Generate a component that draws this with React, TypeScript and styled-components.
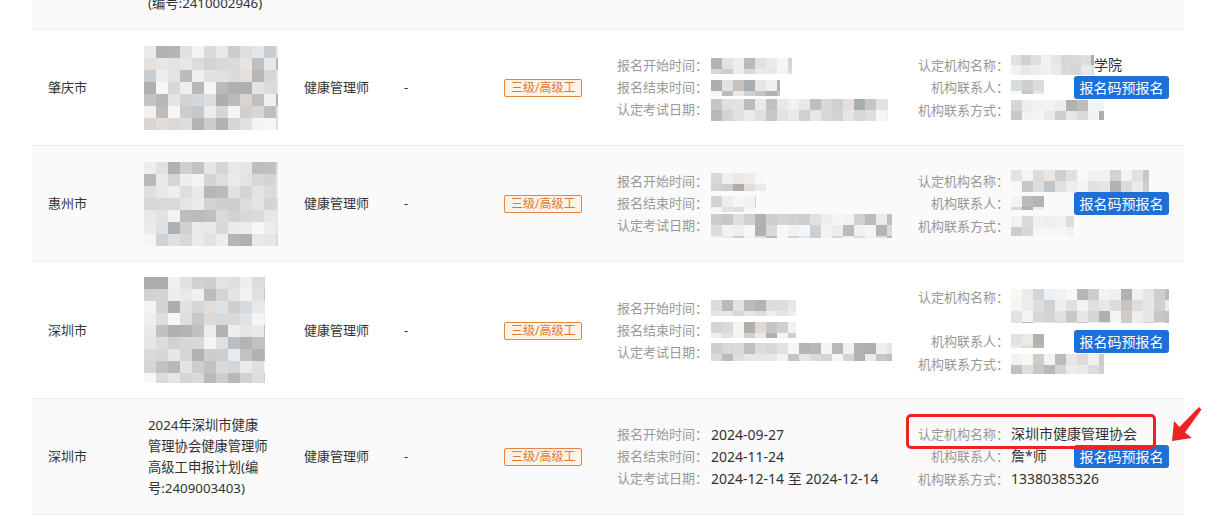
import React from 'react';
import styled, { createGlobalStyle } from 'styled-components';

const Global = createGlobalStyle`
  html, body { margin: 0; padding: 0; background: #fff; }
  body {
    font-family: "Noto Sans", "Noto Sans CJK SC", sans-serif;
    font-size: 13px;
    color: #333;
  }
`;

const Page = styled.div`
  width: 1228px;
  height: 526px;
  overflow: hidden;
  padding-left: 32px;
  box-sizing: border-box;
`;

const Table = styled.div`
  width: 1152px;
`;

const Row = styled.div<{ $striped?: boolean; $offset?: number }>`
  position: relative;
  display: grid;
  grid-template-columns: 100px 156px 100px 100px 113px 301px 282px;
  align-items: center;
  min-height: 116px;
  box-sizing: border-box;
  border-bottom: 1px solid #ebeef5;
  background: ${(p) => (p.$striped ? '#fafafa' : '#fff')};
  margin-top: ${(p) => p.$offset ?? 0}px;
`;

const Cell = styled.div`
  padding: 15px 16px;
  line-height: 21px;
  color: #333;
  white-space: nowrap;
`;

const PlanLine = styled.div`
  line-height: 21px;
  font-size: 13.3px;
`;

const MosaicBlock = styled.div<{ $shift?: number }>`
  margin-left: ${(p) => p.$shift ?? 0}px;
  line-height: 0;
`;

const Badge = styled.span`
  display: inline-block;
  height: 18px;
  line-height: 16px;
  padding: 0 6px;
  box-sizing: border-box;
  font-size: 12px;
  color: #e2782f;
  background: #fef3e9;
  border: 1px solid #e6853f;
  border-radius: 2px;
`;

const InfoLine = styled.div`
  display: flex;
  align-items: center;
  height: 22px;
  white-space: nowrap;
`;

const InfoLabel = styled.span`
  color: #999;
`;

const InfoValue = styled.span`
  color: #333;
  font-size: 14px;
  margin-left: 3px;
  display: inline-flex;
  align-items: center;
`;

const OrgLine = styled.div`
  display: flex;
  align-items: flex-start;
  line-height: 22px;
  min-height: 22px;
`;

const OrgLabel = styled.span`
  width: 91px;
  flex-shrink: 0;
  text-align: right;
  color: #999;
  white-space: nowrap;
`;

const OrgValue = styled.span<{ $w?: number; $tall?: boolean }>`
  ${(p) => (p.$w ? `width: ${p.$w}px; flex-shrink: 0;` : 'flex: 1;')}
  margin-left: 2px;
  color: #333;
  font-size: 14px;
  display: inline-flex;
  align-items: ${(p) => (p.$tall ? 'flex-start' : 'center')};
  padding-top: ${(p) => (p.$tall ? '3px' : '0')};
  box-sizing: border-box;
  min-height: ${(p) => (p.$tall ? '44px' : '22px')};
  white-space: nowrap;
`;

const PreButton = styled.button`
  width: 95px;
  height: 23px;
  padding: 0;
  border: none;
  border-radius: 3px;
  background: #1f6fd8;
  color: #fff;
  font-family: "Noto Sans CJK SC", sans-serif;
  font-size: 14px;
  line-height: 23px;
  cursor: pointer;
  flex-shrink: 0;
`;

const Highlight = styled.div`
  position: absolute;
  left: 874px;
  top: 15px;
  width: 250px;
  height: 35px;
  border: 3px solid #ee2222;
  border-radius: 5px;
  box-sizing: border-box;
  pointer-events: none;
`;

const ArrowWrap = styled.svg`
  position: absolute;
  left: 1133px;
  top: 4px;
  overflow: visible;
`;

function makeRand(seed: number) {
  let s = seed;
  return () => {
    s = (s * 9301 + 49297) % 233280;
    return s / 233280;
  };
}

type MosaicProps = { w: number; h: number; cell?: number; seed: number; dark?: number; light?: number };

function Mosaic({ w, h, cell = 12, seed, dark = 0.22, light = 0.1 }: MosaicProps) {
  const rnd = makeRand(seed);
  const cols = Math.ceil(w / cell);
  const rows = Math.ceil(h / cell);
  const rects: React.ReactNode[] = [];
  for (let r = 0; r < rows; r++) {
    for (let c = 0; c < cols; c++) {
      const a = rnd();
      const b = rnd();
      let v: number;
      if (a < dark) v = 172 + Math.round(b * 28);
      else if (a < 1 - light) v = 204 + Math.round(b * 34);
      else v = 238 + Math.round(b * 10);
      const tint = Math.round((rnd() - 0.5) * 6);
      rects.push(
        <rect
          key={`${r}-${c}`}
          x={c * cell}
          y={r * cell}
          width={cell}
          height={cell}
          fill={`rgb(${v + tint},${v},${v - tint})`}
        />
      );
    }
  }
  return (
    <svg width={w} height={h} viewBox={`0 0 ${w} ${h}`} style={{ display: 'inline-block', verticalAlign: 'middle' }}>
      {rects}
    </svg>
  );
}

function RedArrow() {
  return (
    <ArrowWrap width={42} height={44} viewBox="0 0 42 44">
      <polygon points="7,38 9,18 14.5,24 34,4 36.5,6.5 20,29.5 27,35" fill="#ee2222" />
    </ArrowWrap>
  );
}

const Info = ({ start, end, date }: { start: React.ReactNode; end: React.ReactNode; date: React.ReactNode }) => (
  <>
    <InfoLine>
      <InfoLabel>报名开始时间：</InfoLabel>
      <InfoValue>{start}</InfoValue>
    </InfoLine>
    <InfoLine>
      <InfoLabel>报名结束时间：</InfoLabel>
      <InfoValue>{end}</InfoValue>
    </InfoLine>
    <InfoLine>
      <InfoLabel>认定考试日期：</InfoLabel>
      <InfoValue>{date}</InfoValue>
    </InfoLine>
  </>
);

export default function App() {
  return (
    <>
      <Global />
      <Page>
        <Table>
          <Row $striped $offset={-86}>
            <Cell>深圳市</Cell>
            <Cell>
              <PlanLine>2024年深圳市职业</PlanLine>
              <PlanLine>技能鉴定健康管理师</PlanLine>
              <PlanLine>三级申报计划</PlanLine>
              <PlanLine>(编号:2410002946)</PlanLine>
            </Cell>
            <Cell>健康管理师</Cell>
            <Cell>-</Cell>
            <Cell>
              <Badge>三级/高级工</Badge>
            </Cell>
            <Cell />
            <Cell />
          </Row>

          <Row>
            <Cell>肇庆市</Cell>
            <Cell>
              <MosaicBlock $shift={-4}>
                <Mosaic w={134} h={84} seed={11} />
              </MosaicBlock>
            </Cell>
            <Cell>健康管理师</Cell>
            <Cell>-</Cell>
            <Cell>
              <Badge>三级/高级工</Badge>
            </Cell>
            <Cell>
              <Info
                start={<Mosaic w={81} h={16} cell={11} seed={21} />}
                end={<Mosaic w={69} h={16} cell={11} seed={22} light={0.3} />}
                date={<Mosaic w={177} h={22} cell={11} seed={23} />}
              />
            </Cell>
            <Cell>
              <OrgLine>
                <OrgLabel>认定机构名称：</OrgLabel>
                <OrgValue>
                  <Mosaic w={83} h={20} cell={10} seed={31} />
                  学院
                </OrgValue>
              </OrgLine>
              <OrgLine>
                <OrgLabel>机构联系人：</OrgLabel>
                <OrgValue $w={63}>
                  <Mosaic w={33} h={14} cell={11} seed={32} />
                </OrgValue>
                <PreButton>报名码预报名</PreButton>
              </OrgLine>
              <OrgLine>
                <OrgLabel>机构联系方式：</OrgLabel>
                <OrgValue>
                  <Mosaic w={93} h={20} cell={11} seed={33} light={0.3} />
                </OrgValue>
              </OrgLine>
            </Cell>
          </Row>

          <Row $striped>
            <Cell>惠州市</Cell>
            <Cell>
              <MosaicBlock $shift={-4}>
                <Mosaic w={134} h={84} seed={41} />
              </MosaicBlock>
            </Cell>
            <Cell>健康管理师</Cell>
            <Cell>-</Cell>
            <Cell>
              <Badge>三级/高级工</Badge>
            </Cell>
            <Cell>
              <Info
                start={<Mosaic w={55} h={18} cell={11} seed={51} light={0.3} />}
                end={<Mosaic w={45} h={16} cell={11} seed={52} light={0.4} />}
                date={<Mosaic w={181} h={24} cell={11} seed={53} light={0.3} />}
              />
            </Cell>
            <Cell>
              <OrgLine>
                <OrgLabel>认定机构名称：</OrgLabel>
                <OrgValue>
                  <Mosaic w={138} h={22} cell={11} seed={61} light={0.3} />
                </OrgValue>
              </OrgLine>
              <OrgLine>
                <OrgLabel>机构联系人：</OrgLabel>
                <OrgValue $w={63}>
                  <Mosaic w={33} h={14} cell={11} seed={62} light={0.4} />
                </OrgValue>
                <PreButton>报名码预报名</PreButton>
              </OrgLine>
              <OrgLine>
                <OrgLabel>机构联系方式：</OrgLabel>
                <OrgValue>
                  <Mosaic w={63} h={20} cell={11} seed={63} light={0.4} />
                </OrgValue>
              </OrgLine>
            </Cell>
          </Row>

          <Row>
            <Cell>深圳市</Cell>
            <Cell>
              <MosaicBlock $shift={-4}>
                <Mosaic w={121} h={106} seed={71} light={0.15} />
              </MosaicBlock>
            </Cell>
            <Cell>健康管理师</Cell>
            <Cell>-</Cell>
            <Cell>
              <Badge>三级/高级工</Badge>
            </Cell>
            <Cell>
              <Info
                start={<Mosaic w={85} h={16} cell={11} seed={81} light={0.2} />}
                end={<Mosaic w={85} h={16} cell={11} seed={82} light={0.3} />}
                date={<Mosaic w={181} h={18} cell={11} seed={83} light={0.2} />}
              />
            </Cell>
            <Cell>
              <OrgLine>
                <OrgLabel>认定机构名称：</OrgLabel>
                <OrgValue $tall>
                  <Mosaic w={158} h={34} cell={11} seed={91} light={0.2} />
                </OrgValue>
              </OrgLine>
              <OrgLine>
                <OrgLabel>机构联系人：</OrgLabel>
                <OrgValue $w={63}>
                  <Mosaic w={33} h={14} cell={11} seed={92} />
                </OrgValue>
                <PreButton>报名码预报名</PreButton>
              </OrgLine>
              <OrgLine>
                <OrgLabel>机构联系方式：</OrgLabel>
                <OrgValue>
                  <Mosaic w={93} h={20} cell={11} seed={93} light={0.3} />
                </OrgValue>
              </OrgLine>
            </Cell>
          </Row>

          <Row $striped>
            <Cell>深圳市</Cell>
            <Cell>
              <PlanLine>2024年深圳市健康</PlanLine>
              <PlanLine>管理协会健康管理师</PlanLine>
              <PlanLine>高级工申报计划(编</PlanLine>
              <PlanLine>号:2409003403)</PlanLine>
            </Cell>
            <Cell>健康管理师</Cell>
            <Cell>-</Cell>
            <Cell>
              <Badge>三级/高级工</Badge>
            </Cell>
            <Cell>
              <Info start="2024-09-27" end="2024-11-24" date="2024-12-14 至 2024-12-14" />
            </Cell>
            <Cell>
              <OrgLine>
                <OrgLabel>认定机构名称：</OrgLabel>
                <OrgValue>深圳市健康管理协会</OrgValue>
              </OrgLine>
              <OrgLine>
                <OrgLabel>机构联系人：</OrgLabel>
                <OrgValue $w={63}>詹*师</OrgValue>
                <PreButton>报名码预报名</PreButton>
              </OrgLine>
              <OrgLine>
                <OrgLabel>机构联系方式：</OrgLabel>
                <OrgValue>13380385326</OrgValue>
              </OrgLine>
            </Cell>
            <Highlight />
            <RedArrow />
          </Row>
        </Table>
      </Page>
    </>
  );
}
